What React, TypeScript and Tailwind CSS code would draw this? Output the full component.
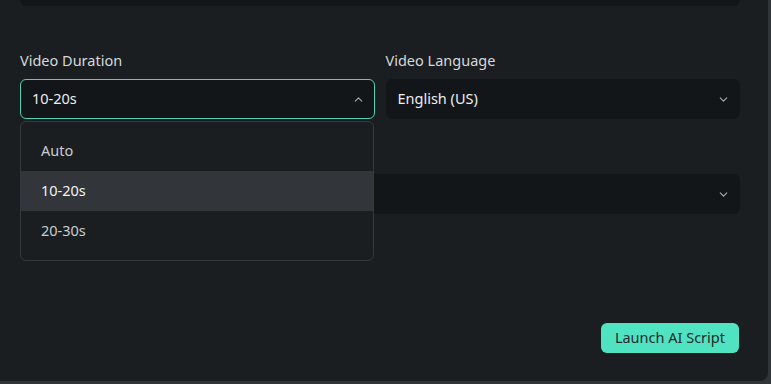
import React from "react";
import {ChevronDown, ChevronUp} from "lucide-react";

const options = ["Auto", "10-20s", "20-30s"];

const Select = ({value, open, className}: { value?: string; open?: boolean; className?: string }) => {
  return (
    <div
      className={
        "relative flex h-10 items-center justify-between rounded-md border pl-[11px] pr-[9px] " +
        (open ? "border-[#4fd1b4] bg-[#131619] " : "border-transparent bg-[#131619] ") +
        (className ?? "")
      }
    >
      <span className="text-[14.5px] text-[#eceef0]">{value}</span>
      {open ? (
        <ChevronUp size={13} strokeWidth={2} className="text-[#a9adb1]"/>
      ) : (
        <ChevronDown size={13} strokeWidth={2} className="text-[#a9adb1]"/>
      )}
    </div>
  );
};

export default function App() {
  return (
    <div className="h-[384px] w-[771px] overflow-hidden bg-[#30353a] font-['Noto_Sans',sans-serif]">
      <div className="relative flex h-[381px] w-[768px] flex-col rounded-br-lg bg-[#1b1e21] pl-5 pr-7">
        {/* top box cut off by the window */}
        <div className="h-[6px] w-full rounded-b-md bg-[#131619]"/>

        <div className="mt-[44px] grid grid-cols-2 gap-x-[11px]">
          <div>
            <div className="mb-[9px] h-5 text-[14.5px] leading-5 text-[#d5d8db]">Video Duration</div>
            <Select value="10-20s" open/>
          </div>
          <div>
            <div className="mb-[9px] h-5 text-[14.5px] leading-5 text-[#d5d8db]">Video Language</div>
            <Select value="English (US)"/>
          </div>
        </div>

        {/* second row, mostly hidden under the open menu */}
        <div className="mt-[21px]">
          <div className="mb-[14px] h-5"/>
          <Select/>
        </div>

        <div className="mt-[109px] flex justify-end pr-px">
          <button className="h-[30px] rounded-md bg-[#50e3c2] px-[14px] text-[14.5px] text-[#24292d]">
            Launch AI Script
          </button>
        </div>

        {/* open dropdown menu */}
        <div className="absolute left-5 top-[121px] w-[354px] rounded-md border border-[#35393e] bg-[#1b1e21] py-[9px]">
          {options.map((opt) => (
            <div
              key={opt}
              className={
                "flex h-10 items-center px-5 text-[14.5px] " +
                (opt === "10-20s" ? "bg-[#323539] text-[#f2f4f5]" : "text-[#c9cdd1]")
              }
            >
              {opt}
            </div>
          ))}
        </div>
      </div>
    </div>
  );
}
